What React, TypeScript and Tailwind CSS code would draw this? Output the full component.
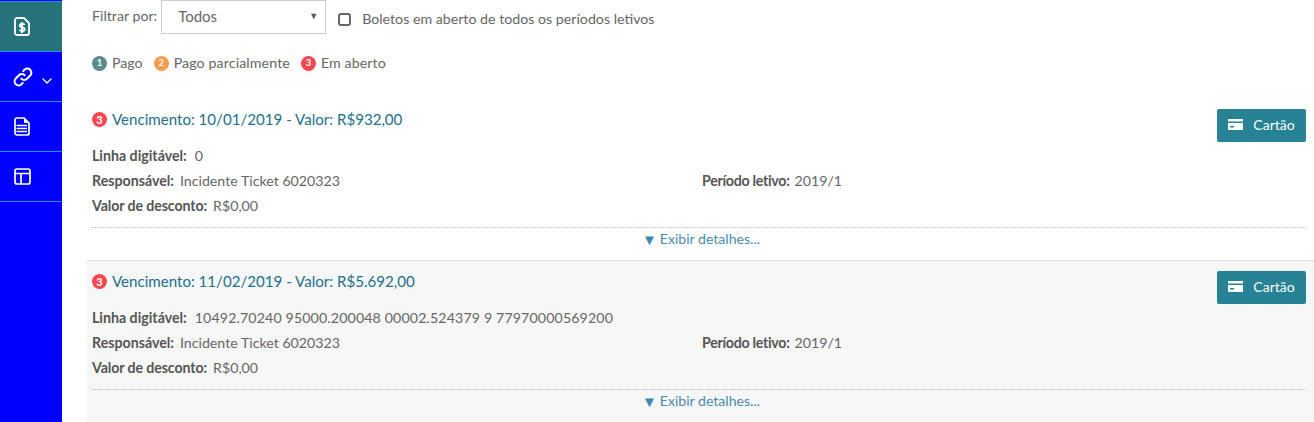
import { ChevronDown } from 'lucide-react';

const font = "font-['Lato','Noto_Sans',sans-serif]";

function Badge({ n, color, text = 'text-[9.500px]', className = '' }: { n: number; color: string; text?: string; className?: string }) {
  return (
    <span className={`inline-flex h-[15px] w-[15px] shrink-0 items-center justify-center rounded-full font-bold text-white ${text} ${color} ${className}`}>
      {n}
    </span>
  );
}

function BoletoIcon() {
  return (
    <svg width="16" height="19" viewBox="0 0 16 19" fill="none" stroke="white">
      <path d="M2.500 1h7.500l5 5v10a2 2 0 0 1-2 2h-10.500a2 2 0 0 1-1.500-2v-13a2 2 0 0 1 1.500-2z" strokeWidth="1.800" />
      <path d="M10.500 8c-.4-.9-1.300-1.300-2.400-1.300-1.400 0-2.400.7-2.400 1.800 0 2.500 5 1.300 5 3.800 0 1.100-1.100 1.800-2.500 1.800-1.200 0-2.200-.5-2.600-1.400M8 5v11" strokeWidth="1.900" />
    </svg>
  );
}

function LinkIcon() {
  return (
    <svg width="20" height="20" viewBox="0 0 20 20" fill="none" stroke="white" strokeWidth="2" strokeLinecap="round" className="-ml-px">
      <path d="M8.300 11.700a4 4 0 0 0 5.700 0l3.200-3.200a4 4 0 0 0-5.700-5.700l-1.300 1.300" />
      <path d="M11.700 8.300a4 4 0 0 0-5.700 0l-3.200 3.200a4 4 0 0 0 5.700 5.700l1.300-1.300" />
    </svg>
  );
}

function ListIcon() {
  return (
    <svg width="16" height="19" viewBox="0 0 16 19" fill="none" stroke="white">
      <path d="M2.500 1h7.500l5 5v10a2 2 0 0 1-2 2h-10.500a2 2 0 0 1-1.500-2v-13a2 2 0 0 1 1.500-2z" strokeWidth="1.700" />
      <path d="M10.500 2.500v3h3z" fill="white" strokeWidth="1" />
      <path d="M2.500 8.500h10.500M2.500 11.500h10.500M2.500 14.500h10.500" strokeWidth="1.300" />
    </svg>
  );
}

function LayoutIcon() {
  return (
    <svg width="17" height="17" viewBox="0 0 17 17" fill="none" stroke="white" strokeWidth="1.700">
      <rect x="1" y="1" width="15" height="15" rx="2" />
      <path d="M1 5.500h15M7 5.500v10.500" />
    </svg>
  );
}

function CardIcon() {
  return (
    <svg width="15" height="11" viewBox="0 0 15 11" className="shrink-0">
      <path d="M0 0h15v2.500h-15z" fill="white" />
      <path fillRule="evenodd" d="M0 4h15v7h-15zM2 7v1.500h4v-1.500z" fill="white" />
    </svg>
  );
}

function SideItem({ active, children }: { active?: boolean; children: React.ReactNode }) {
  return (
    <div className={`flex h-[50px] items-center border-b border-[#1e90e8] pl-[14px] ${active ? 'bg-[#26737c]' : ''}`}>
      {children}
    </div>
  );
}

function Field({ label, value, gap = 'ml-[6px]', labelTrack = '', wide }: { label: string; value: string; gap?: string; labelTrack?: string; wide?: boolean }) {
  return (
    <div className="flex">
      <span className={`font-bold text-[#555] ${labelTrack}`}>{label}</span>
      <span className={`${gap} text-[#666] ${wide ? 'tracking-[0.13px]' : ''}`}>{value}</span>
    </div>
  );
}

function Boleto({ due, amount, code, shaded }: { due: string; amount: string; code: string; shaded?: boolean }) {
  return (
    <section className={`pl-[5px] pr-2 ${shaded ? 'bg-[#f7f7f7]' : 'border-b border-[#e2e2e2]'}`}>
      <div className="flex h-[47px] items-start justify-between pt-[10px]">
        <div className="flex items-center gap-[5px] text-[15.100px] leading-[20px] text-[#23708c]">
          <Badge n={3} color="bg-[#f9464f]" text="text-[11px]" className="mt-[1px]" />
          <span>Vencimento: {due} - Valor: {amount}</span>
        </div>
        <button className="flex h-[33px] w-[89px] items-center justify-center gap-[10px] rounded-[2px] bg-[#268294] pb-[2px] text-[14px] text-white">
          <CardIcon />
          Cartão
        </button>
      </div>
      <div className="flex flex-col gap-[5px] text-[14.200px] leading-[20px]">
        <Field label="Linha digitável:" value={code} gap="ml-[8px]" wide />
        <div className="grid grid-cols-[610px_1fr]">
          <Field label="Responsável:" value="Incidente Ticket 6020323" />
          <Field label="Período letivo:" value="2019/1" gap="ml-[5px]" labelTrack="tracking-[-0.28px]" />
        </div>
        <Field label="Valor de desconto:" value="R$0,00" labelTrack="tracking-[-0.1px]" />
      </div>
      <div className="mt-[11px] flex h-[33px] items-center justify-center gap-[3px] border-t border-dotted border-[#bbb] pb-[10px] pl-[4px] text-[14.100px] text-[#4b8cab]">
        <span className="text-[15px] leading-none text-[#3f87ab]">▼</span>
        Exibir detalhes...
      </div>
    </section>
  );
}

export default function App() {
  return (
    <div className={`flex h-[422px] w-[1314px] overflow-hidden bg-white ${font}`}>
      <aside className="h-full w-[62px] shrink-0 bg-[#0000ff] pt-[1px]">
        <div className="border-t border-[#1e90e8]">
          <SideItem active><BoletoIcon /></SideItem>
          <SideItem>
            <LinkIcon />
            <ChevronDown size={16} strokeWidth={2} className="ml-[6px] mt-[9px] text-white" />
          </SideItem>
          <SideItem><ListIcon /></SideItem>
          <SideItem><LayoutIcon /></SideItem>
        </div>
      </aside>
      <main className="min-w-0 flex-1 pl-[25px]">
        <div className="flex h-[34px] items-start pl-[5px] text-[14.200px] text-[#666]">
          <span className="pt-[5px]">Filtrar por:</span>
          <div className="relative ml-[4px] flex h-[34px] w-[165px] items-center border border-[#ccc] pb-[1px] pl-[16px] text-[15px]">
            Todos
            <span className="absolute right-[7px] top-[8px] text-[9px] text-[#555]">▼</span>
          </div>
          <span className="ml-[12px] mt-[13px] h-[13px] w-[13px] rounded-[3px] border-[2.500px] border-[#666]" />
          <span className="ml-[11px] mt-[9px] leading-[20px]">Boletos em aberto de todos os períodos letivos</span>
        </div>
        <div className="mt-[19px] flex h-[20px] items-center pl-[5px] text-[14.200px] text-[#666]">
          <Badge n={1} color="bg-[#5b8a8c]" />
          <span className="ml-[5px]">Pago</span>
          <Badge n={2} color="bg-[#fb9a4e]" className="ml-[11px]" />
          <span className="ml-[5px] tracking-[0.12px]">Pago parcialmente</span>
          <Badge n={3} color="bg-[#f9464f]" className="ml-[11px]" />
          <span className="ml-[5px] tracking-[0.1px]">Em aberto</span>
        </div>
        <div className="mt-[26px]">
          <Boleto due="10/01/2019" amount="R$932,00" code="0" />
          <Boleto due="11/02/2019" amount="R$5.692,00" code="10492.70240 95000.200048 00002.524379 9 77970000569200" shaded />
        </div>
      </main>
    </div>
  );
}
